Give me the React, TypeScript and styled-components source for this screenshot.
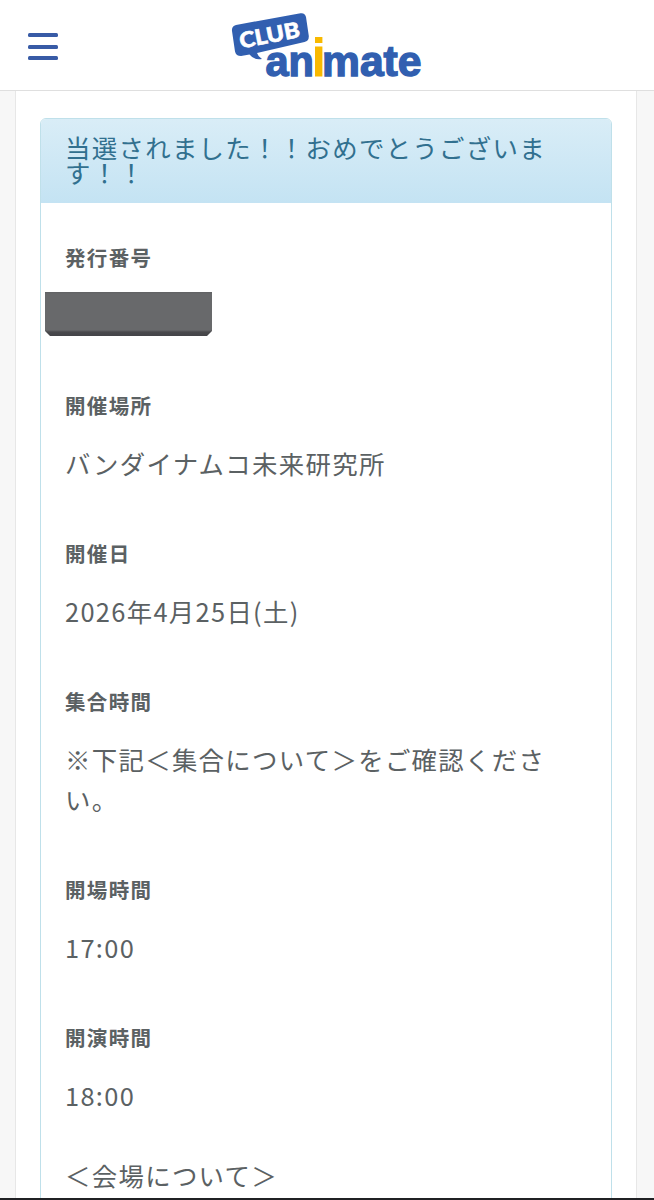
import React from "react";
import styled, { createGlobalStyle } from "styled-components";

const GlobalStyle = createGlobalStyle`
  *, *::before, *::after { box-sizing: border-box; }
  html, body { margin: 0; padding: 0; }
  body {
    background: #f7f7f7;
    color: #5b6163;
    font-family: "Noto Sans CJK JP", sans-serif;
    font-size: 25.4px;
    line-height: 40.4px;
    letter-spacing: 1.33px;
  }
`;

const Screen = styled.div`
  display: flex;
  flex-direction: column;
  height: 1200px;
  overflow: hidden;
  border-bottom: 2px solid #202124;
`;

const Header = styled.header`
  display: grid;
  grid-template-columns: 86px 1fr 86px;
  flex: none;
  height: 91px;
  background: #fff;
  border-bottom: 1px solid #dfdfdf;
`;

const MenuButton = styled.button`
  display: flex;
  flex-direction: column;
  gap: 7.5px;
  width: 30px;
  margin: 33px 0 0 28px;
  padding: 0;
  border: 0;
  background: none;
`;

const MenuBar = styled.span`
  display: block;
  height: 4px;
  border-radius: 1.5px;
  background: #385ba6;
`;

const LogoLink = styled.a`
  justify-self: center;
  height: 90px;
  svg { display: block; }
`;

const Content = styled.main`
  flex: 1;
  min-height: 0;
  margin: 0 17px 0 15px;
  padding: 27px 24px 0;
  background: #fff;
  border: solid #e7e7e7;
  border-width: 0 1px;
`;

const Panel = styled.section`
  height: 1300px;
  border: 1px solid #bfe0ea;
  border-radius: 6px;
  overflow: hidden;
`;

const PanelTitle = styled.h1`
  margin: 0;
  height: 84px;
  padding: 16px 24px 0;
  font-size: inherit;
  font-weight: 400;
  line-height: 25.4px;
  color: #31708f;
  background: linear-gradient(#d9edf7, #c4e3f3);
`;

const PanelBody = styled.div`
  padding: 38px 24px 0;
`;

const Field = styled.dl`
  margin: 0 0 53.6px;
`;

const Label = styled.dt`
  font-size: 20.5px;
  font-weight: 700;
  line-height: 33px;
  margin-bottom: 21px;
`;

const Value = styled.dd`
  margin: 0;
  min-height: 40.4px;
`;

const RedactedNumber = styled.div`
  width: 167px;
  height: 44px;
  margin: -3px 0 0 -20px;
  margin-bottom: -0.6px;
  background: linear-gradient(#606163 0, #68696b 2px, #68696b 38px, #49494c 40px, #444448 100%);
  clip-path: polygon(0 0, 100% 0, 100% 39px, 162px 100%, 5px 100%, 0 39px);
`;

const Paragraph = styled.p`
  margin: -14px 0 0;
`;

const fields = [
  { label: "発行番号", value: null },
  { label: "開催場所", value: "バンダイナムコ未来研究所" },
  { label: "開催日", value: "2026年4月25日(土)" },
  { label: "集合時間", value: "※下記＜集合について＞をご確認ください。" },
  { label: "開場時間", value: "17:00" },
  { label: "開演時間", value: "18:00" },
];

function Logo() {
  return (
    <svg width="200" height="90" viewBox="227 0 200 90" role="img" aria-label="CLUB animate">
      <path
        d="M236 25 L300.5 13.2 Q305 12.6 306 17 L308.8 36 Q309 41 304.5 42 L257 53 Q258 56.5 262 59 Q254 60.5 249.5 54.6 L241 56 Q236 56 235 51.5 L232 31 Q231.5 26 236 25 Z"
        fill="#315fb0"
      />
      <text
        transform="translate(241 48.5) rotate(-11)"
        fontFamily="Lato"
        fontWeight="900"
        fontSize="21.5"
        letterSpacing="0"
        textLength="61"
        lengthAdjust="spacingAndGlyphs"
        fill="#fff"
        stroke="#fff"
        strokeWidth="0.6"
      >
        CLUB
      </text>
      <g fontFamily="Liberation Sans" fontWeight="700" fontSize="43" letterSpacing="0" fill="#315fb0" stroke="#315fb0" strokeWidth="1.4">
        <text x="265.5" y="76" textLength="48.5" lengthAdjust="spacingAndGlyphs">an</text>
        <text x="322" y="76" textLength="99.5" lengthAdjust="spacingAndGlyphs">mate</text>
      </g>
      <path d="M315 37h7.4v6h-7.4zM315 46.5h7.4v30h-7.4z" fill="#f8b900" />
    </svg>
  );
}

export default function App() {
  return (
    <>
      <GlobalStyle />
      <Screen>
        <Header>
          <MenuButton aria-label="メニュー">
            <MenuBar />
            <MenuBar />
            <MenuBar />
          </MenuButton>
          <LogoLink>
            <Logo />
          </LogoLink>
        </Header>
        <Content>
          <Panel>
            <PanelTitle>当選されました！！おめでとうございます！！</PanelTitle>
            <PanelBody>
              {fields.map(({ label, value }) => (
                <Field key={label}>
                  <Label>{label}</Label>
                  <Value>{value ?? <RedactedNumber />}</Value>
                </Field>
              ))}
              <Paragraph>＜会場について＞</Paragraph>
            </PanelBody>
          </Panel>
        </Content>
      </Screen>
    </>
  );
}
